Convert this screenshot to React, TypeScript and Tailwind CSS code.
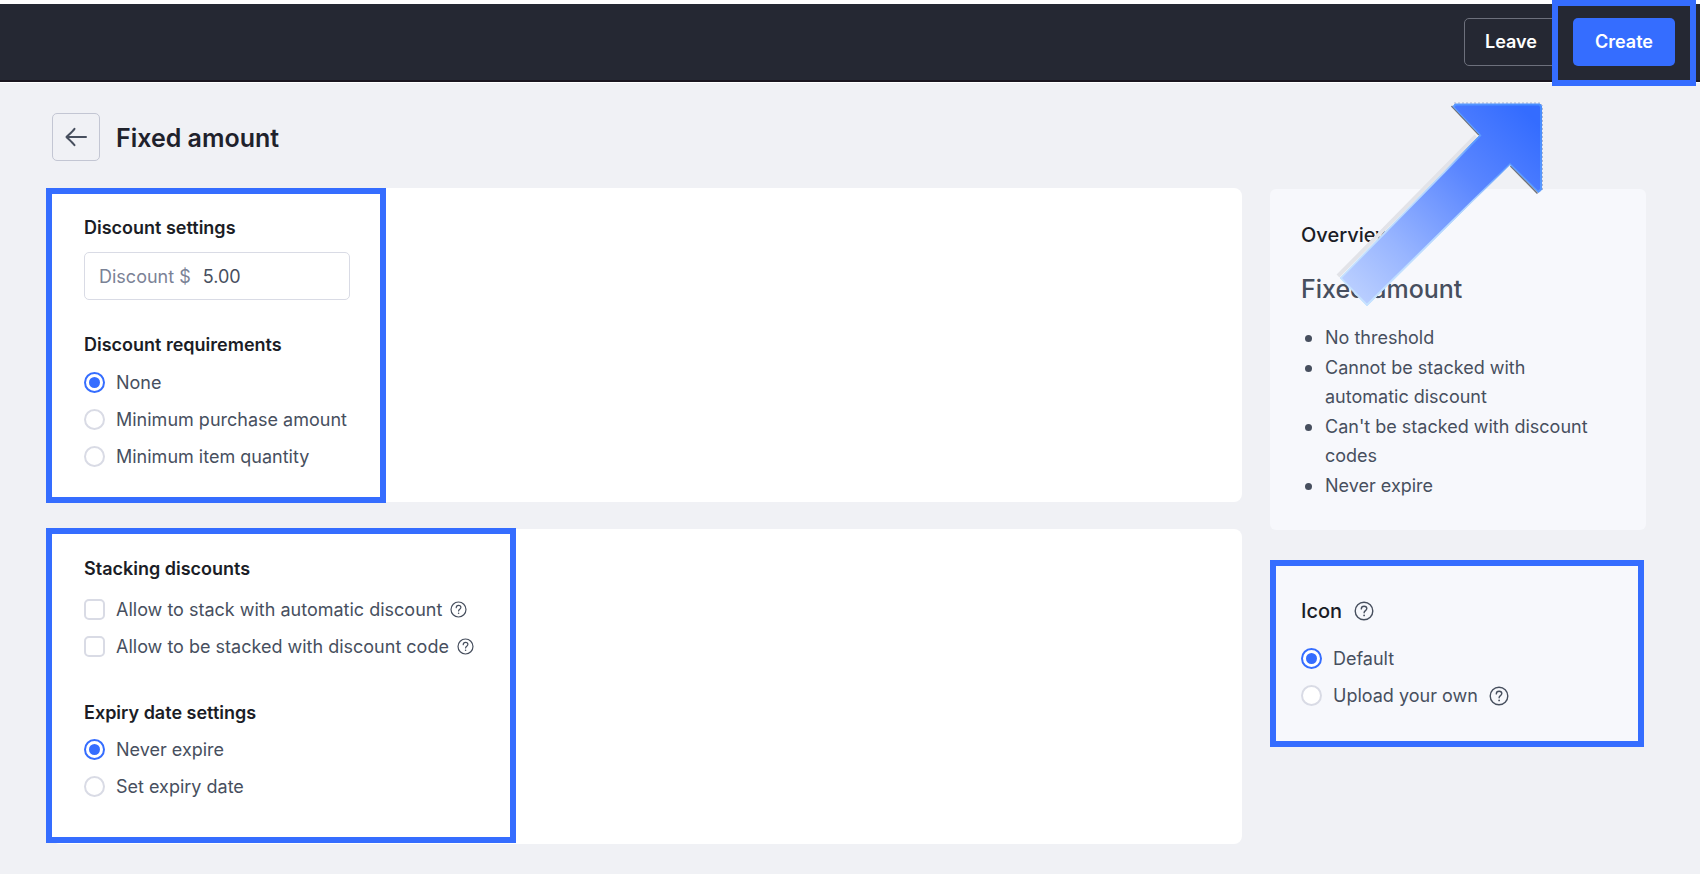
import { useState } from "react";
import type { ReactNode } from "react";

function HelpIcon({ size }: { size: "sm" | "md" }) {
  return (
    <svg
      viewBox="0 0 20 20"
      className={size === "sm" ? "h-[17px] w-[17px] shrink-0" : "h-5 w-5 shrink-0"}
      fill="none"
      stroke="#474f5e"
      strokeWidth={1.4}
      strokeLinecap="round"
      strokeLinejoin="round"
      aria-hidden="true"
    >
      <circle cx="10" cy="10" r="8.8" />
      <path d="M7.3 7.9C7.3 6.2 8.5 5.2 10.1 5.2C11.7 5.2 12.8 6.2 12.8 7.6C12.8 9.6 10.1 9.6 10.1 11.7" />
      <circle cx="10.1" cy="14.4" r="0.9" fill="#474f5e" stroke="none" />
    </svg>
  );
}

type RadioProps = {
  name: string;
  label: string;
  checked: boolean;
  onSelect: () => void;
  children?: ReactNode;
};

function Radio({ name, label, checked, onSelect, children }: RadioProps) {
  return (
    <div className="flex h-[25px] items-center">
      <label className="flex items-center gap-[11px] whitespace-nowrap text-[18px] leading-[25px]">
        <input
          type="radio"
          name={name}
          checked={checked}
          onChange={onSelect}
          className="m-0 grid h-[21px] w-[21px] shrink-0 appearance-none place-content-center rounded-full border-2 border-[#d9dbe5] bg-white before:h-[11px] before:w-[11px] before:rounded-full before:content-[''] checked:border-[#356dff] checked:before:bg-[#356dff]"
        />
        {label}
      </label>
      {children}
    </div>
  );
}

function Checkbox({ label }: { label: string }) {
  return (
    <div className="flex h-[25px] items-center gap-2">
      <label className="flex items-center gap-[11px] whitespace-nowrap text-[18px] leading-[25px]">
        <input
          type="checkbox"
          className="m-0 h-[21px] w-[21px] shrink-0 appearance-none rounded-[5px] border-2 border-[#d9dbe5] bg-white checked:border-[#356dff] checked:bg-[#356dff]"
        />
        {label}
      </label>
      <HelpIcon size="sm" />
    </div>
  );
}

function SectionTitle({ children }: { children: ReactNode }) {
  return <h2 className="text-[18px] leading-6 font-semibold text-[#1b1d26]">{children}</h2>;
}

function PointerArrow() {
  return (
    <svg
      viewBox="0 0 240 230"
      className="pointer-events-none absolute top-[90px] right-[140px] h-[230px] w-[240px]"
      aria-hidden="true"
    >
      <defs>
        <linearGradient id="arrow-fill" gradientUnits="userSpaceOnUse" x1="34" y1="202" x2="210" y2="26">
          <stop offset="0" stopColor="#b9ceff" />
          <stop offset="0.25" stopColor="#98b5ff" />
          <stop offset="0.65" stopColor="#5a86ff" />
          <stop offset="1" stopColor="#346cff" />
        </linearGradient>
        <linearGradient id="arrow-edge" gradientUnits="userSpaceOnUse" x1="34" y1="202" x2="210" y2="26">
          <stop offset="0" stopColor="#c6e2ff" />
          <stop offset="0.6" stopColor="#b0d4ff" />
          <stop offset="0.75" stopColor="#5f9dff" />
          <stop offset="1" stopColor="#4a8dff" />
        </linearGradient>
        <filter id="arrow-soft" x="-10%" y="-10%" width="120%" height="120%">
          <feGaussianBlur stdDeviation="0.7" />
        </filter>
      </defs>
      <path d="M18 186L156 46" stroke="#e2e3e8" strokeWidth="4" filter="url(#arrow-soft)" />
      <path
        d="M131.5 16L159 45M190.5 76L217.5 103.5"
        fill="none"
        stroke="#70737c"
        strokeWidth="1.6"
        filter="url(#arrow-soft)"
      />
      <path
        d="M134 13H220.5L222.5 16V101"
        fill="none"
        stroke="#a9b4d0"
        strokeWidth="1"
        strokeDasharray="2 2"
      />
      <path
        d="M135 14H220L221.5 16V100L218.5 102.5L190 74.5L47 216L20 188L160 45L133 16.5Z"
        fill="url(#arrow-edge)"
        stroke="url(#arrow-edge)"
        strokeWidth="1"
        filter="url(#arrow-soft)"
      />
      <path
        d="M136 15.5H219L220 17V99L218 100.5L190 73L47 213.5L22 188L161.5 45.5L134.5 17Z"
        fill="url(#arrow-fill)"
      />
    </svg>
  );
}

const overview: string[] = [
  "No threshold",
  "Cannot be stacked with automatic discount",
  "Can't be stacked with discount codes",
  "Never expire",
];

const requirements: string[] = ["None", "Minimum purchase amount", "Minimum item quantity"];
const expiries: string[] = ["Never expire", "Set expiry date"];

export default function App() {
  const [requirement, setRequirement] = useState("None");
  const [expiry, setExpiry] = useState("Never expire");
  const [icon, setIcon] = useState("Default");

  return (
    <div className="relative min-h-screen overflow-hidden bg-[#f0f1f5] font-['Inter',sans-serif] text-[#474f5e]">
      <header className="flex items-center justify-end gap-[15px] border-t-4 border-b-2 border-t-white border-b-[#1a1620] bg-[#252833] pt-[14px] pr-[25px] pb-[14px] shadow-[0_1px_0_#ffffff]">
        <button
          type="button"
          className="h-12 rounded-[5px] border border-[#6d707c] px-5 text-[18px] leading-6 font-semibold text-white"
        >
          Leave
        </button>
        <div className="relative">
          <button
            type="button"
            className="h-12 rounded-[5px] bg-[#356dff] px-[22px] text-[18px] leading-6 font-semibold text-white"
          >
            Create
          </button>
          <div className="pointer-events-none absolute -top-[18px] -right-[21px] -bottom-5 -left-[21px] border-[6px] border-[#356dff]" />
        </div>
      </header>

      <main className="pt-[31px] pr-[54px] pb-7 pl-[52px]">
        <div className="flex items-center gap-4">
          <button
            type="button"
            aria-label="Back"
            className="flex h-12 w-12 items-center justify-center rounded-[5px] border border-[#c3c6d3]"
          >
            <svg
              viewBox="0 0 22 20"
              className="h-5 w-[22px]"
              fill="none"
              stroke="#474f5e"
              strokeWidth={2}
              strokeLinecap="round"
              strokeLinejoin="round"
              aria-hidden="true"
            >
              <path d="M21 10H1.5M9.5 1.8C7.5 4.5 4 7.5 1.5 10C4 12.5 7.5 15.5 9.5 18.2" />
            </svg>
          </button>
          <h1 className="pt-[2px] text-[25px] leading-8 font-semibold text-[#1f222c]">Fixed amount</h1>
        </div>

        <div className="mt-[27px] grid grid-cols-[minmax(0,1fr)_376px] items-start gap-7">
          <div className="flex flex-col gap-[27px]">
            <section className="relative rounded-[8px] bg-white px-8 pt-7 pb-[33px]">
              <div className="pointer-events-none absolute top-0 -left-[6px] -bottom-px w-[340px] border-[6px] border-[#356dff]" />
              <SectionTitle>Discount settings</SectionTitle>
              <label className="mt-3 flex h-12 w-[266px] items-center gap-3 rounded-[5px] border border-[#d9dbe5] px-[14px] text-[18px] whitespace-nowrap text-[#7b8296]">
                Discount $
                <input
                  type="text"
                  defaultValue="5.00"
                  className="h-6 w-full min-w-0 bg-transparent text-[#474f5e] outline-none"
                />
              </label>
              <div className="mt-[33px]">
                <SectionTitle>Discount requirements</SectionTitle>
              </div>
              <div className="mt-[13px] flex flex-col gap-3">
                {requirements.map((r) => (
                  <Radio
                    key={r}
                    name="requirement"
                    label={r}
                    checked={requirement === r}
                    onSelect={() => setRequirement(r)}
                  />
                ))}
              </div>
            </section>

            <section className="relative rounded-[8px] bg-white px-8 pt-7 pb-[45px]">
              <div className="pointer-events-none absolute -top-px bottom-px -left-[6px] w-[470px] border-[6px] border-[#356dff]" />
              <SectionTitle>Stacking discounts</SectionTitle>
              <div className="mt-4 flex flex-col gap-3">
                <Checkbox label="Allow to stack with automatic discount" />
                <Checkbox label="Allow to be stacked with discount code" />
              </div>
              <div className="mt-[42px]">
                <SectionTitle>Expiry date settings</SectionTitle>
              </div>
              <div className="mt-3 flex flex-col gap-3">
                {expiries.map((e) => (
                  <Radio
                    key={e}
                    name="expiry"
                    label={e}
                    checked={expiry === e}
                    onSelect={() => setExpiry(e)}
                  />
                ))}
              </div>
            </section>
          </div>

          <aside className="flex flex-col gap-[30px] pt-px">
            <section className="rounded-[6px] bg-[#f7f8fc] px-[31px] pt-8 pb-[30px]">
              <h2 className="text-[20px] leading-7 font-medium text-[#1b1d26]">Overview</h2>
              <p className="mt-6 text-[25px] leading-8 font-medium">Fixed amount</p>
              <ul className="mt-[18px] flex flex-col gap-px pr-4 text-[18px] leading-[29px]">
                {overview.map((item) => (
                  <li key={item} className="flex gap-[13px] pl-1">
                    <span className="mt-3 h-[7px] w-[7px] shrink-0 rounded-full bg-[#474f5e]" />
                    {item}
                  </li>
                ))}
              </ul>
            </section>

            <section className="mr-[2px] border-[6px] border-[#356dff] bg-[#f7f8fc] px-[25px] pt-[31px] pb-[33px]">
              <div className="flex items-center gap-3">
                <h2 className="text-[20px] leading-7 font-medium text-[#1b1d26]">Icon</h2>
                <HelpIcon size="md" />
              </div>
              <div className="mt-[21px] flex flex-col gap-3">
                <Radio
                  name="icon"
                  label="Default"
                  checked={icon === "Default"}
                  onSelect={() => setIcon("Default")}
                />
                <Radio
                  name="icon"
                  label="Upload your own"
                  checked={icon === "Upload your own"}
                  onSelect={() => setIcon("Upload your own")}
                >
                  <span className="ml-[11px]">
                    <HelpIcon size="md" />
                  </span>
                </Radio>
              </div>
            </section>
          </aside>
        </div>
      </main>

      <PointerArrow />
    </div>
  );
}
